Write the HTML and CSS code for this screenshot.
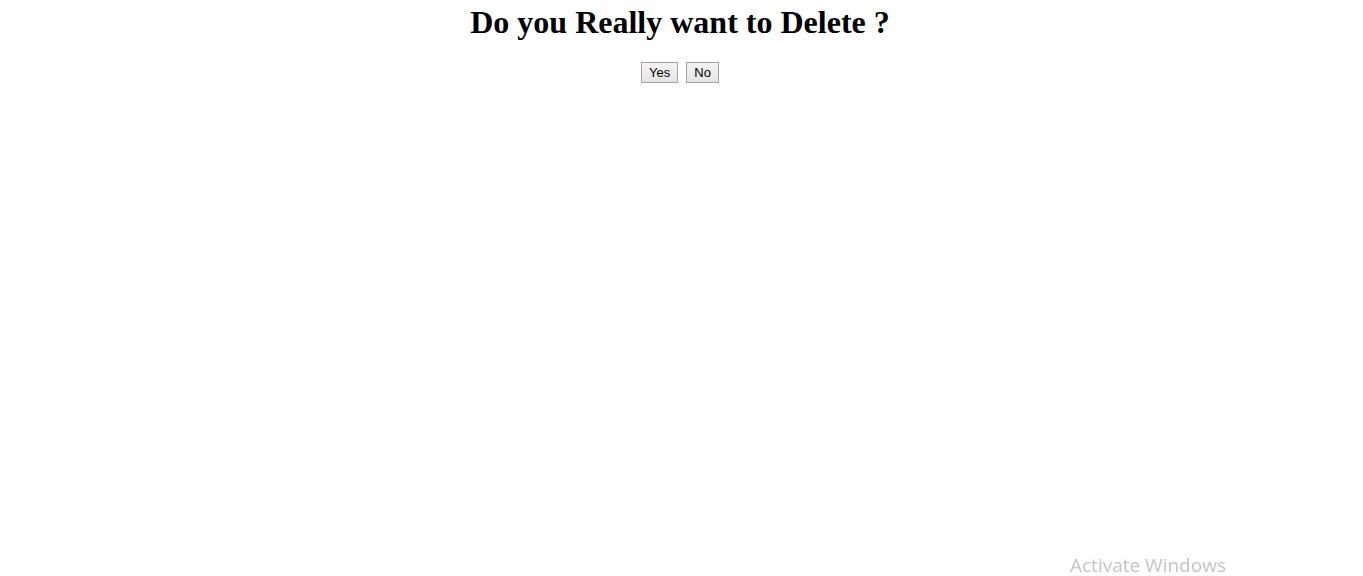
FILE: index.html
```html
<!DOCTYPE html>
<html>
<head>
<meta charset="utf-8">
<link rel="stylesheet" href="styles.css">
</head>
<body>
<div class="confirm">
  <h1 class="title">Do you Really want to Delete ?</h1>
  <form class="actions">
    <button type="button" class="btn">Yes</button>
    <button type="button" class="btn">No</button>
  </form>
</div>
<div class="watermark">Activate Windows</div>
</body>
</html>
```
FILE: styles.css
```css
html, body {
  margin: 0;
  padding: 0;
  background: #fff;
}
body {
  font-family: "Liberation Serif", "Times New Roman", serif;
}
.confirm {
  text-align: center;
  padding-top: 4px;
  padding-right: 3px;
}
.title {
  font-size: 32px;
  font-weight: bold;
  margin: 0 0 21px 0;
  color: #000;
}
.actions {
  display: flex;
  justify-content: center;
  gap: 8px;
}
.btn {
  font-family: "Liberation Sans", Arial, sans-serif;
  font-size: 13px;
  padding: 0 7px;
  border: 1px solid #a3a3a3;
  border-radius: 0;
  background: linear-gradient(#f4f4f4, #e4e4e4);
  color: #000;
  height: 21px;
}
.watermark {
  position: fixed;
  left: 1070px;
  top: 552px;
  font-family: "Open Sans", "Noto Sans", sans-serif;
  font-size: 19px;
  color: #c4c4c4;
}
```
